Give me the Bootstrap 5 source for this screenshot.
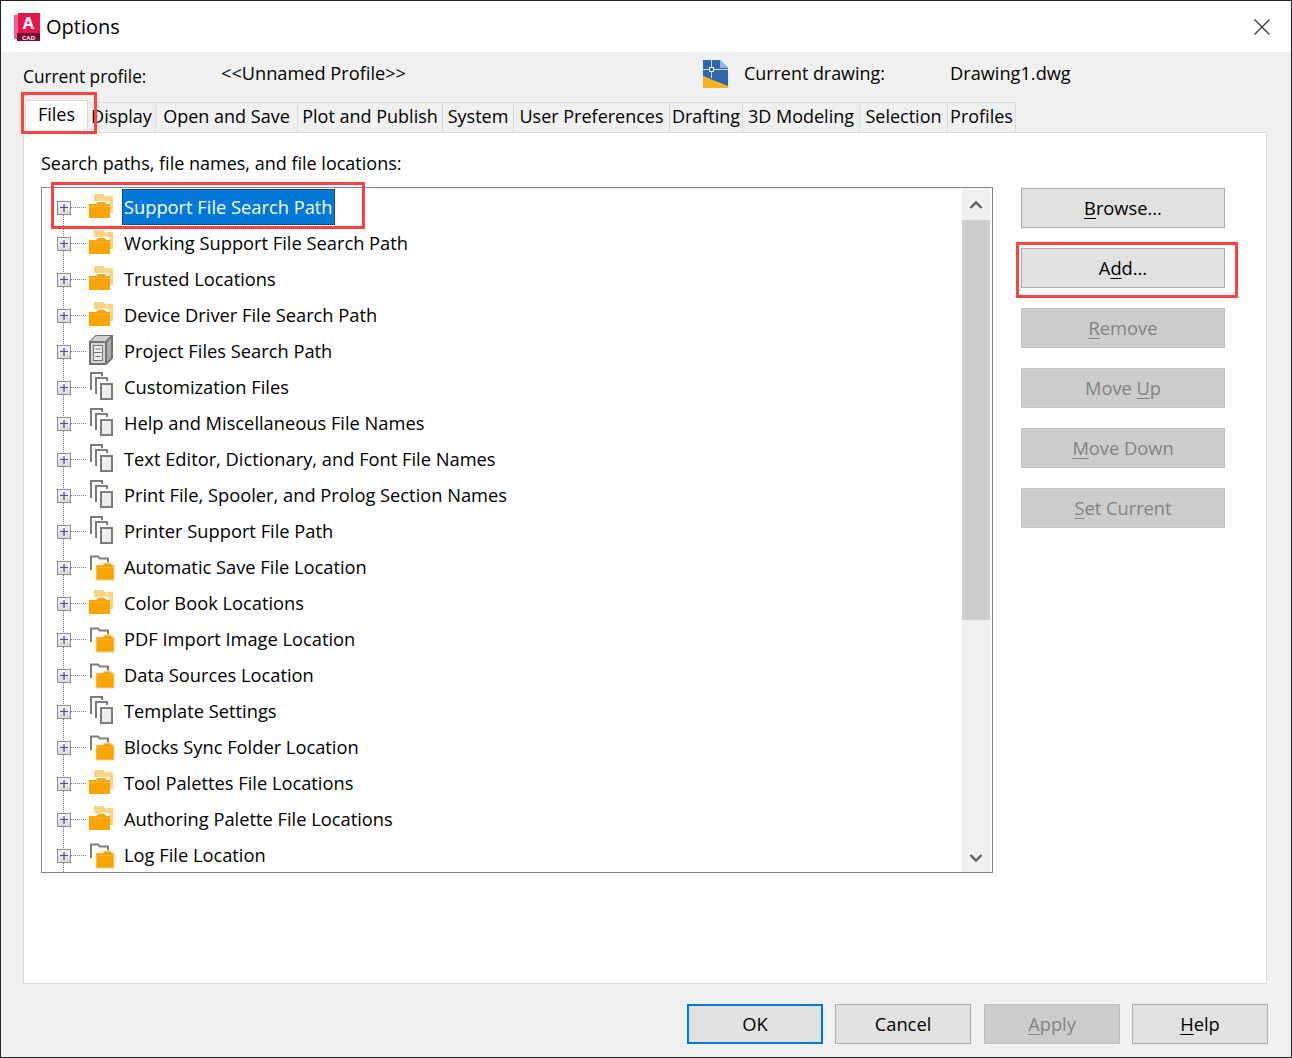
<!DOCTYPE html>
<html lang="en">
<head>
  <meta charset="UTF-8" />
  <meta name="viewport" content="width=device-width, initial-scale=1.0"/>
  <title>Options</title>
  <link href="https://cdn.jsdelivr.net/npm/bootstrap@5.3.3/dist/css/bootstrap.min.css" rel="stylesheet">
  <style>
    html, body { margin: 0; background: #f0f0f0; }
    body { font-family: "Open Sans", "Liberation Sans", sans-serif; font-size: 18.3px; color: #000; line-height: 24px; }
    .dlg { position: relative; width: 1292px; height: 1058px; border: 1px solid #222; background: #f0f0f0; overflow: hidden; }
    .dlg-title { height: 51px; flex: none; background: #fff; padding-left: 13px; padding-right: 21px; }
    .dlg-title-text { font-size: 20px; margin-left: 6px; }
    .profile-bar { height: 50px; flex: none; padding-left: 22px; }
    .lbl-profile { width: 198px; font-size: 17.300px; }
    .val-profile { width: 482px; margin-top: -8px; font-size: 18.200px; }
    .lbl-drawing { width: 206px; margin-top: -8px; margin-left: 16px; font-size: 17.900px; }
    .val-drawing { margin-top: -8px; font-size: 18.200px; }
    .dwg-icon { margin-top: -7px; }

    .opt-tabs { height: 30px; flex: none; margin: 0 0 0 24px; padding: 0; list-style: none; font-size: 18px; }
    .opt-tab { height: 30px; border: 1px solid #d9d9d9; border-bottom: 0; border-left: 0; line-height: 26px; white-space: nowrap; text-align: center; }
    .opt-tab.on { height: 32px; width: 63px; margin-top: -2px; background: #fff; border-left: 1px solid #d9d9d9; position: relative; z-index: 1; }
    .opt-tab:nth-child(2) { width: 68px; }
    .opt-tab:nth-child(3) { width: 142px; }
    .opt-tab:nth-child(4) { width: 145px; }
    .opt-tab:nth-child(5) { width: 71px; }
    .opt-tab:nth-child(6) { width: 156px; }
    .opt-tab:nth-child(7) { width: 73px; }
    .opt-tab:nth-child(8) { width: 117px; }
    .opt-tab:nth-child(9) { width: 88px; }
    .opt-tab:nth-child(10) { width: 68px; }

    .opt-panel { width: 1244px; height: 852px; flex: none; margin-left: 22px; background: #fff; border: 1px solid #d9d9d9; padding-left: 17px; }
    .tree-col { width: 952px; }
    .tree-cap { height: 54px; padding-top: 18px; font-size: 18px; }
    .tree-box { height: 686px; border: 1px solid #82828c; padding-top: 1px; overflow: hidden; }
    .tree-list { width: 920px; margin: 0; padding: 0; list-style: none; }
    .tree-row { height: 36px; white-space: nowrap; }
    .tree-row svg { flex: none; }
    .tree-row span { padding: 0 2px; height: 36px; line-height: 36px; margin-left: 6px; }
    .tree-row span.sel { background: #0078d7; color: #fff; outline: 1px dotted #222; outline-offset: -1px; }
    .scroll-rail { width: 28px; height: 684px; margin-right: 2px; background: #f0f0f0; }
    .scroll-end { height: 31px; }
    .scroll-thumb { height: 400px; background: #cdcdcd; }

    .side-col { width: 204px; margin-left: 28px; padding-top: 55px; gap: 20px; }
    .win-btn { height: 40px; padding: 0; border: 1px solid #adadad; border-radius: 0; background: #e1e1e1; color: #000; font-size: 18.3px; line-height: 36px; }
    .win-btn.off { background: #ccc; border-color: #bfbfbf; color: #838383; opacity: 1; }
    .win-btn.dflt { border: 2px solid #0078d7; }
    .foot-btns { padding: 20px 0 0 686px; gap: 12px; }
    .foot-btns .win-btn { width: 136px; }
    .foot-btns .win-btn.off { margin-left: 1px; }

    .red-mark { position: absolute; border: 3px solid #ff4343; pointer-events: none; z-index: 5; }
    .mark-files { left: 20px; top: 91px; width: 76px; height: 42px; }
    .mark-tree { left: 50px; top: 181px; width: 314px; height: 47px; }
    .mark-add { left: 1015px; top: 241px; width: 222px; height: 56px; }
    u { text-underline-offset: 3px; }
  </style>
</head>
<body>
  <!-- shared tree graphics -->
  <svg width="0" height="0" class="d-block">
    <defs>
      <linearGradient id="plus-fill" x1="0" y1="0" x2="0" y2="1"><stop offset="0" stop-color="#f6f6f6"/><stop offset="1" stop-color="#d8d8d8"/></linearGradient>
      <symbol id="btn-plus" viewBox="0 0 44 36">
        <rect x="15.500" y="12.500" width="13" height="13" fill="url(#plus-fill)" stroke="#8c8c8c"/>
        <path d="M18 18.500h8M22 15v8" stroke="#3f4f90" stroke-width="1.2"/>
        <path d="M29 18.500h15" stroke="#777" stroke-dasharray="1 1"/>
      </symbol>
      <symbol id="ico-folders" viewBox="0 0 30 36">
        <path d="M8 5h9l2 2h8v17H8z" fill="#fcd488"/>
        <path d="M5 12h18v17H5z" fill="#fff"/>
        <path d="M3 15h7l2-2h7l1 2h4v14H3z" fill="#f7a404"/>
        <path d="M3.500 17.500h20" stroke="#fbb534"/>
      </symbol>
      <symbol id="ico-gfolder" viewBox="0 0 30 36">
        <path d="M5 21V7.500h7l2 2h8v4" fill="none" stroke="#7c7c7c" stroke-width="2"/>
        <path d="M10 16h7l2-2h5l2 2h2v15H10z" fill="#f7a404" stroke="#fcd488"/>
        <path d="M11 18.500h16" stroke="#fbb534"/>
      </symbol>
      <symbol id="ico-docs" viewBox="0 0 30 36">
        <path d="M5 21V4h11v3" fill="none" stroke="#7c7c7c" stroke-width="2"/>
        <path d="M10 25V9h11v3" fill="none" stroke="#7c7c7c" stroke-width="2"/>
        <rect x="15" y="15" width="11" height="15" fill="#eee" stroke="#7c7c7c" stroke-width="2"/>
      </symbol>
      <symbol id="ico-cabinet" viewBox="0 0 30 36">
        <path d="M4 9l6-6h16v22l-6 6H4z" fill="#a8a8a8" stroke="#737373" stroke-width="2"/>
        <path d="M4 9l6-6h16l-6 6z" fill="#cfcfcf"/>
        <path d="M4 9h16v22M20 9l6-6" fill="none" stroke="#737373" stroke-width="2"/>
        <rect x="5" y="10" width="14" height="20" fill="#d4d4d4"/>
        <rect x="7.500" y="12.500" width="9" height="15" fill="#ececec" stroke="#737373"/>
        <path d="M7.500 19.500h9M9.500 16h5M9.500 23.500h5" stroke="#737373"/>
      </symbol>
    </defs>
  </svg>

  <div class="dlg d-flex flex-column">
    <!-- Title -->
    <div class="dlg-title d-flex align-items-center justify-content-between">
      <div class="d-flex align-items-center">
        <svg width="26" height="28" viewBox="0 0 26 28">
          <path d="M0 2h6v24H0z" fill="#f3648f"/>
          <path d="M4 0h22v20H4z" fill="#e5174f"/>
          <path d="M3 20h23v8H3z" fill="#7d0a30"/>
          <text x="14.500" y="16" text-anchor="middle" font-family="Liberation Sans" font-weight="700" font-size="17" fill="#fff">A</text>
          <text x="14.500" y="26.500" text-anchor="middle" font-family="Liberation Sans" font-weight="700" font-size="6" fill="#fff">CAD</text>
        </svg>
        <span class="dlg-title-text">Options</span>
      </div>
      <svg width="16" height="16" viewBox="0 0 16 16"><path d="M.5.5l15 15M15.500.5l-15 15" stroke="#333" stroke-width="1.2"/></svg>
    </div>

    <!-- Profile -->
    <div class="profile-bar d-flex align-items-center">
      <div class="lbl-profile">Current profile:</div>
      <div class="val-profile">&lt;&lt;Unnamed Profile&gt;&gt;</div>
      <svg class="dwg-icon" width="25" height="28" viewBox="0 0 25 28">
        <path d="M0 0h17l8 8v20H0z" fill="#2f66ab"/>
        <path d="M17 0l8 8h-8z" fill="#93b7da"/>
        <path d="M0 16l25 10v2H0z" fill="#f5b324"/>
        <path d="M8.500 0v18M0 9.500h25" stroke="#cfe0f0" stroke-width="1"/>
        <rect x="6.500" y="7.500" width="4" height="4" fill="#2f66ab" stroke="#fff"/>
      </svg>
      <div class="lbl-drawing">Current drawing:</div>
      <div class="val-drawing">Drawing1.dwg</div>
    </div>

    <!-- Tabs -->
    <ul class="opt-tabs d-flex">
      <li class="opt-tab on">Files</li>
      <li class="opt-tab">Display</li>
      <li class="opt-tab">Open and Save</li>
      <li class="opt-tab">Plot and Publish</li>
      <li class="opt-tab">System</li>
      <li class="opt-tab">User Preferences</li>
      <li class="opt-tab">Drafting</li>
      <li class="opt-tab">3D Modeling</li>
      <li class="opt-tab">Selection</li>
      <li class="opt-tab">Profiles</li>
    </ul>

    <!-- Files page -->
    <div class="opt-panel d-flex">
      <div class="tree-col">
        <div class="tree-cap">Search paths, file names, and file locations:</div>
        <div class="tree-box d-flex justify-content-between">
          <ul class="tree-list">
            <li class="tree-row d-flex"><svg width="44" height="36"><path d="M21.500 26v10" stroke="#777" stroke-dasharray="1 1"/><use href="#btn-plus"/></svg><svg width="30" height="36"><use href="#ico-folders"/></svg><span class="sel">Support File Search Path</span></li>
            <li class="tree-row d-flex"><svg width="44" height="36"><path d="M21.500 0v36" stroke="#777" stroke-dasharray="1 1"/><use href="#btn-plus"/></svg><svg width="30" height="36"><use href="#ico-folders"/></svg><span>Working Support File Search Path</span></li>
            <li class="tree-row d-flex"><svg width="44" height="36"><path d="M21.500 0v36" stroke="#777" stroke-dasharray="1 1"/><use href="#btn-plus"/></svg><svg width="30" height="36"><use href="#ico-folders"/></svg><span>Trusted Locations</span></li>
            <li class="tree-row d-flex"><svg width="44" height="36"><path d="M21.500 0v36" stroke="#777" stroke-dasharray="1 1"/><use href="#btn-plus"/></svg><svg width="30" height="36"><use href="#ico-folders"/></svg><span>Device Driver File Search Path</span></li>
            <li class="tree-row d-flex"><svg width="44" height="36"><path d="M21.500 0v36" stroke="#777" stroke-dasharray="1 1"/><use href="#btn-plus"/></svg><svg width="30" height="36"><use href="#ico-cabinet"/></svg><span>Project Files Search Path</span></li>
            <li class="tree-row d-flex"><svg width="44" height="36"><path d="M21.500 0v36" stroke="#777" stroke-dasharray="1 1"/><use href="#btn-plus"/></svg><svg width="30" height="36"><use href="#ico-docs"/></svg><span>Customization Files</span></li>
            <li class="tree-row d-flex"><svg width="44" height="36"><path d="M21.500 0v36" stroke="#777" stroke-dasharray="1 1"/><use href="#btn-plus"/></svg><svg width="30" height="36"><use href="#ico-docs"/></svg><span>Help and Miscellaneous File Names</span></li>
            <li class="tree-row d-flex"><svg width="44" height="36"><path d="M21.500 0v36" stroke="#777" stroke-dasharray="1 1"/><use href="#btn-plus"/></svg><svg width="30" height="36"><use href="#ico-docs"/></svg><span>Text Editor, Dictionary, and Font File Names</span></li>
            <li class="tree-row d-flex"><svg width="44" height="36"><path d="M21.500 0v36" stroke="#777" stroke-dasharray="1 1"/><use href="#btn-plus"/></svg><svg width="30" height="36"><use href="#ico-docs"/></svg><span>Print File, Spooler, and Prolog Section Names</span></li>
            <li class="tree-row d-flex"><svg width="44" height="36"><path d="M21.500 0v36" stroke="#777" stroke-dasharray="1 1"/><use href="#btn-plus"/></svg><svg width="30" height="36"><use href="#ico-docs"/></svg><span>Printer Support File Path</span></li>
            <li class="tree-row d-flex"><svg width="44" height="36"><path d="M21.500 0v36" stroke="#777" stroke-dasharray="1 1"/><use href="#btn-plus"/></svg><svg width="30" height="36"><use href="#ico-gfolder"/></svg><span>Automatic Save File Location</span></li>
            <li class="tree-row d-flex"><svg width="44" height="36"><path d="M21.500 0v36" stroke="#777" stroke-dasharray="1 1"/><use href="#btn-plus"/></svg><svg width="30" height="36"><use href="#ico-folders"/></svg><span>Color Book Locations</span></li>
            <li class="tree-row d-flex"><svg width="44" height="36"><path d="M21.500 0v36" stroke="#777" stroke-dasharray="1 1"/><use href="#btn-plus"/></svg><svg width="30" height="36"><use href="#ico-gfolder"/></svg><span>PDF Import Image Location</span></li>
            <li class="tree-row d-flex"><svg width="44" height="36"><path d="M21.500 0v36" stroke="#777" stroke-dasharray="1 1"/><use href="#btn-plus"/></svg><svg width="30" height="36"><use href="#ico-gfolder"/></svg><span>Data Sources Location</span></li>
            <li class="tree-row d-flex"><svg width="44" height="36"><path d="M21.500 0v36" stroke="#777" stroke-dasharray="1 1"/><use href="#btn-plus"/></svg><svg width="30" height="36"><use href="#ico-docs"/></svg><span>Template Settings</span></li>
            <li class="tree-row d-flex"><svg width="44" height="36"><path d="M21.500 0v36" stroke="#777" stroke-dasharray="1 1"/><use href="#btn-plus"/></svg><svg width="30" height="36"><use href="#ico-gfolder"/></svg><span>Blocks Sync Folder Location</span></li>
            <li class="tree-row d-flex"><svg width="44" height="36"><path d="M21.500 0v36" stroke="#777" stroke-dasharray="1 1"/><use href="#btn-plus"/></svg><svg width="30" height="36"><use href="#ico-folders"/></svg><span>Tool Palettes File Locations</span></li>
            <li class="tree-row d-flex"><svg width="44" height="36"><path d="M21.500 0v36" stroke="#777" stroke-dasharray="1 1"/><use href="#btn-plus"/></svg><svg width="30" height="36"><use href="#ico-folders"/></svg><span>Authoring Palette File Locations</span></li>
            <li class="tree-row d-flex"><svg width="44" height="36"><path d="M21.500 0v36" stroke="#777" stroke-dasharray="1 1"/><use href="#btn-plus"/></svg><svg width="30" height="36"><use href="#ico-gfolder"/></svg><span>Log File Location</span></li>
          </ul>
          <div class="scroll-rail d-flex flex-column">
            <div class="scroll-end d-flex align-items-center justify-content-center">
              <svg width="14" height="10" viewBox="0 0 14 10"><path d="M1.500 8L7 2.500 12.500 8" fill="none" stroke="#606060" stroke-width="2.4"/></svg>
            </div>
            <div class="scroll-thumb"></div>
            <div class="flex-grow-1"></div>
            <div class="scroll-end d-flex align-items-center justify-content-center">
              <svg width="14" height="10" viewBox="0 0 14 10"><path d="M1.500 2L7 7.500 12.500 2" fill="none" stroke="#606060" stroke-width="2.4"/></svg>
            </div>
          </div>
        </div>
      </div>
      <div class="side-col d-flex flex-column">
        <button type="button" class="btn win-btn"><u>B</u>rowse...</button>
        <button type="button" class="btn win-btn">A<u>d</u>d...</button>
        <button type="button" class="btn win-btn off"><u>R</u>emove</button>
        <button type="button" class="btn win-btn off">Move <u>U</u>p</button>
        <button type="button" class="btn win-btn off"><u>M</u>ove Down</button>
        <button type="button" class="btn win-btn off"><u>S</u>et Current</button>
      </div>
    </div>

    <!-- Footer -->
    <div class="foot-btns d-flex">
      <button type="button" class="btn win-btn dflt">OK</button>
      <button type="button" class="btn win-btn">Cancel</button>
      <button type="button" class="btn win-btn off"><u>A</u>pply</button>
      <button type="button" class="btn win-btn"><u>H</u>elp</button>
    </div>

    <div class="red-mark mark-files"></div>
    <div class="red-mark mark-tree"></div>
    <div class="red-mark mark-add"></div>
  </div>

  <script src="https://cdn.jsdelivr.net/npm/bootstrap@5.3.3/dist/js/bootstrap.bundle.min.js"></script>
</body>
</html>
